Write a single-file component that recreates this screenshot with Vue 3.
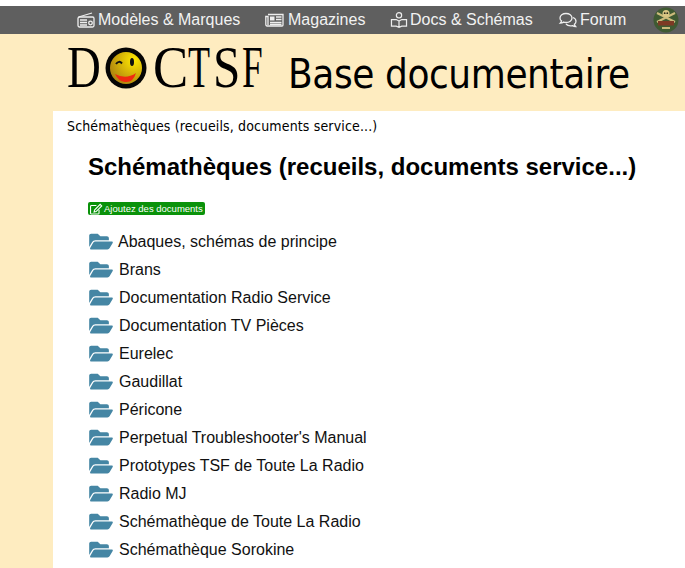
<script setup>
const folders = [
  'Abaques, schémas de principe',
  'Brans',
  'Documentation Radio Service',
  'Documentation TV Pièces',
  'Eurelec',
  'Gaudillat',
  'Péricone',
  "Perpetual Troubleshooter's Manual",
  'Prototypes TSF de Toute La Radio',
  'Radio MJ',
  'Schémathèque de Toute La Radio',
  'Schémathèque Sorokine'
]
</script>

<template>
  <div class="page">
    <nav class="nav">
      <a class="nav-item nav-models">
        <svg class="nav-icon" viewBox="0 0 18 16" fill="none" stroke="#eee" stroke-width="1.3">
          <rect x="1" y="5" width="16" height="10" rx="1.5" />
          <path d="M1.500 5 15 1M3 8h7M3 10.500h7M3 13h7" />
          <circle cx="13.500" cy="11" r="1.800" />
        </svg>
        Modèles &amp; Marques
      </a>
      <a class="nav-item nav-mags">
        <svg class="nav-icon wide" viewBox="0 0 19 14" fill="none" stroke="#eee" stroke-width="1.3">
          <path d="M3 1.500h15v10.500a1 1 0 0 1-1 1H2a1.500 1.500 0 0 1-1.200-1.500V3.500H3V12" />
          <rect x="5" y="3.500" width="4.500" height="4" fill="#eee" stroke="none" />
          <path d="M11 4h5.500M11 6.500h5.500M5 9.500h11.500M5 11.500h11.500" />
        </svg>
        Magazines
      </a>
      <a class="nav-item nav-docs">
        <svg class="nav-icon" viewBox="0 0 18 17" fill="none" stroke="#eee" stroke-width="1.3">
          <circle cx="9" cy="3.500" r="2.800" />
          <path d="M9 9.500 6 8H1v7h5l3 1.200 3-1.200h5V8h-5zM9 9.500v6.700" />
        </svg>
        Docs &amp; Schémas
      </a>
      <a class="nav-item nav-forum">
        <svg class="nav-icon forum" viewBox="0 0 19 16" fill="none" stroke="#eee" stroke-width="1.3">
          <path d="M7.500 1.500c3.400 0 6 2 6 4.500s-2.600 4.500-6 4.500c-.9 0-1.700-.1-2.400-.4-1 .7-2.200 1-3.400 1 .7-.7 1.200-1.500 1.300-2.300C2.100 8.500 1.500 7.300 1.500 6c0-2.500 2.600-4.500 6-4.500z" />
          <path d="M14.500 5.500c1.900.7 3 2.100 3 3.700 0 1.200-.6 2.300-1.600 3.100.1.800.6 1.500 1.200 2.200-1.100 0-2.200-.3-3.100-.9-.6.2-1.300.3-2 .3-1.900 0-3.500-.7-4.500-1.900" />
        </svg>
        Forum
      </a>
      <svg class="badge" viewBox="0 0 26 26" aria-hidden="true">
        <circle cx="13" cy="13" r="12.500" fill="#3f5a32" />
        <path d="M4 6 22 15M22 6 4 15" stroke="#cdbb7c" stroke-width="2" />
        <circle cx="13" cy="6.500" r="3.500" fill="#d9c684" />
        <circle cx="11.700" cy="6.200" r=".9" fill="#2a2a1a" />
        <circle cx="14.300" cy="6.200" r=".9" fill="#2a2a1a" />
        <rect x="5" y="14" width="16" height="4.500" fill="#7d3a24" />
        <rect x="9" y="20" width="8" height="2" fill="#c9b97a" />
      </svg>
    </nav>

    <header class="header">
      <div class="logo">
        <span class="ltr ltr-d">D</span>
        <span class="smiley">
          <svg viewBox="0 0 42 42" aria-hidden="true">
            <defs>
              <radialGradient id="face" cx="0.75" cy="0.25" r="0.9">
                <stop offset="0" stop-color="#ffe800" />
                <stop offset="1" stop-color="#a87c10" />
              </radialGradient>
            </defs>
            <circle cx="21" cy="21" r="20.500" fill="#050505" />
            <circle cx="21" cy="21" r="16" fill="url(#face)" />
            <path d="M11 17q3-4 6-.5" stroke="#111" stroke-width="2" fill="none" />
            <ellipse cx="27" cy="15" rx="2" ry="4" fill="#111" />
            <path d="M10 27q11 6 21-1q-3 10-11 9q-7-1-10-8z" fill="#f02a10" />
          </svg>
        </span>
        <span class="ltr ltr-c">C</span>
        <span class="ltr ltr-t">T</span>
        <span class="ltr ltr-s">S</span>
        <span class="ltr ltr-f">F</span>
      </div>
      <h2 class="site-title">Base documentaire</h2>
    </header>

    <main class="content">
      <div class="crumb">Schémathèques (recueils, documents service...)</div>
      <div class="inner">
        <h1 class="title">Schémathèques (recueils, documents service...)</h1>
        <a class="add">
          <svg viewBox="0 0 576 512" class="add-icon" fill="none" stroke="#fff" stroke-width="48">
            <path d="M400 290v150a40 40 0 0 1-40 40H64a40 40 0 0 1-40-40V144a40 40 0 0 1 40-40h220" />
            <path d="M200 300 180 390l90-20L520 120 450 50z" />
          </svg>
          Ajoutez des documents
        </a>
        <ul class="list">
          <li v-for="(name, i) in folders" :key="name" class="row">
            <svg class="folder" viewBox="0 0 576 512" aria-hidden="true">
              <path fill="#4586a4" d="M572.694 292.093L500.27 416.248A63.997 63.997 0 0 1 444.989 448H45.025c-18.523 0-30.064-20.093-20.731-36.093l72.424-124.155A64 64 0 0 1 152 256h399.964c18.523 0 30.064 20.093 20.73 36.093zM152 224h328v-48c0-26.51-21.49-48-48-48H272l-64-64H48C21.490 64 0 85.490 0 112v278.046l69.077-118.418C86.214 242.25 118.062 224 152 224z" />
            </svg>
            <span :class="{ first: i === 0 }">{{ name }}</span>
          </li>
        </ul>
      </div>
    </main>
  </div>
</template>

<style>
html, body { margin: 0; padding: 0; background: #feecc0; overflow: hidden; }
</style>

<style scoped>
.page {
  height: 568px;
  overflow: hidden;
  padding-top: 6px;
  box-sizing: border-box;
  background: linear-gradient(#fff 0 6px, #feecc0 6px);
  font-family: "Liberation Sans", Arial, sans-serif;
  color: #000;
}
.nav {
  height: 28px;
  background: #5f5f5f;
  display: flex;
  align-items: center;
  padding-left: 77px;
  color: #f2f2f2;
  font-size: 16px;
}
.nav-item { display: flex; align-items: center; gap: 3px; white-space: nowrap; }
.nav-models { width: 188px; }
.nav-mags { width: 125px; gap: 4px; }
.nav-docs { width: 168px; gap: 2px; }
.nav-forum { width: 95px; gap: 2px; }
.nav-icon { width: 18px; height: 16px; flex: none; }
.nav-icon.wide { width: 19px; }
.nav-icon.forum { width: 20px; }
.badge { width: 26px; height: 26px; flex: none; }

.header {
  height: 77px;
  display: flex;
  align-items: flex-start;
  padding-left: 67px;
}
.logo {
  display: flex;
  align-items: flex-start;
  width: 221px;
  height: 77px;
  font-family: "Liberation Serif", serif;
  font-size: 60px;
  line-height: 60px;
  flex: none;
}
.ltr {
  display: block;
  margin-top: 3px;
  transform-origin: left top;
}
.ltr-d { width: 38px; transform: scaleX(.78); }
.smiley { width: 42px; height: 42px; margin-top: 13px; flex: none; }
.smiley svg { display: block; width: 42px; height: 42px; }
.ltr-c { width: 35px; margin-left: 6px; transform: scaleX(.88); }
.ltr-t { width: 25px; transform: scaleX(.6); }
.ltr-s { width: 29px; transform: scaleX(.82); }
.ltr-f { width: 20px; transform: scaleX(.62); }
.site-title {
  margin: 16px 0 0;
  font-family: "DejaVu Sans Condensed", "DejaVu Sans", sans-serif;
  font-weight: 400;
  font-size: 40px;
  line-height: 48px;
  letter-spacing: -.42px;
  white-space: nowrap;
}

.content {
  margin: 0 0 0 53px;
  background: #fff;
  height: 457px;
}
.crumb {
  padding: 6px 0 0 14px;
  font-family: "DejaVu Sans Condensed", "DejaVu Sans", sans-serif;
  font-size: 14px;
  line-height: 18px;
  letter-spacing: .15px;
  white-space: nowrap;
}
.inner { padding-left: 35px; }
.title {
  margin: 18px 0 0;
  font-size: 24px;
  line-height: 28px;
  font-weight: 700;
  white-space: nowrap;
}
.add {
  display: inline-flex;
  align-items: center;
  gap: 1px;
  margin-top: 21px;
  height: 13px;
  padding: 0 2px;
  background: #0a920a;
  border-radius: 2px;
  color: #fff;
  font-size: 9.500px;
  line-height: 13px;
  vertical-align: top;
}
.add-icon { width: 13px; height: 12px; }
.list { list-style: none; margin: 13px 0 0; padding: 0; }
.row {
  height: 28px;
  display: flex;
  align-items: center;
  font-size: 16px;
  color: #111;
}
.folder { width: 24px; height: 21px; flex: none; margin: 0 6px 0 1px; position: relative; top: -1px; }
.first { margin-left: -1px; }
</style>
